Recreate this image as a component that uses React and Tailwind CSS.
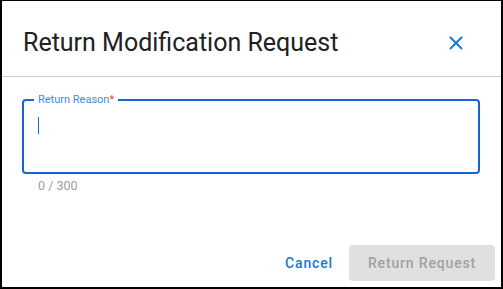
import { X } from 'lucide-react';

export default function App() {
  return (
    <div className="w-[503px] h-[289px] bg-white border-l-2 border-t border-r-2 border-b-2 border-black flex flex-col font-['Roboto',sans-serif] overflow-hidden">
      {/* Header */}
      <div className="h-[76px] flex items-center justify-between pl-[21px] pr-[34px] border-b border-[#cfcfcf] shrink-0">
        <h2 className="text-[25px] leading-none text-[#212121] pt-[8px]">Return Modification Request</h2>
        <button className="text-[#1976d2] pt-[8px]">
          <X className="w-[22px] h-[22px]" strokeWidth={2.2} />
        </button>
      </div>

      {/* Body */}
      <div className="pl-[20px] pr-[21px] pt-[22px]">
        <div className="relative h-[75px] rounded-[4px] border-2 border-[#1565d8]">
          <span className="absolute -top-[9px] left-[10px] px-[4px] bg-white text-[11px] leading-[16px] text-[#3d8be8]">
            Return Reason<span className="text-[#f44336]">*</span>
          </span>
          <div className="ml-[14px] mt-[16px] w-px h-[17px] bg-[#1565d8]" />
        </div>
        <p className="pl-[16px] mt-[4px] text-[12.5px] leading-[16px] text-[#9e9e9e]">0 / 300</p>
      </div>

      {/* Actions */}
      <div className="mt-auto flex items-center justify-end gap-[16px] pr-[6px] pb-[6px]">
        <button className="text-[14px] font-medium tracking-[0.06em] text-[#1976d2]">Cancel</button>
        <button className="w-[146px] h-[36px] rounded-[4px] bg-[#e0e0e0] text-[14px] font-medium tracking-[0.06em] text-[#a0a0a0]">
          Return Request
        </button>
      </div>
    </div>
  );
}
